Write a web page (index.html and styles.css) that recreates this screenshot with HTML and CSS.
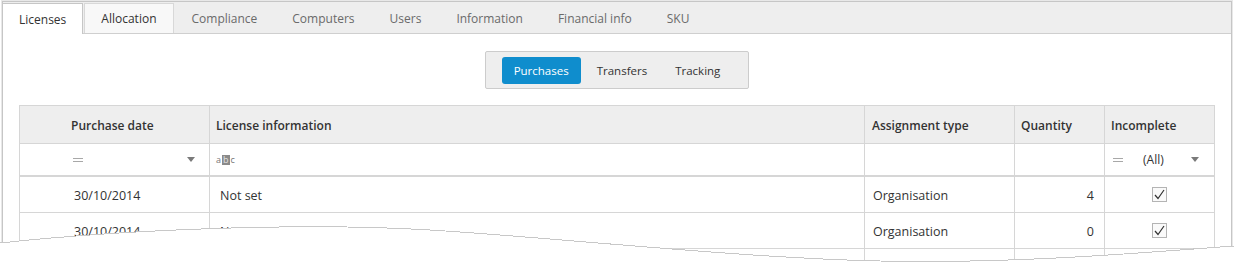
FILE: index.html
```html
<!DOCTYPE html>
<html lang="en">
<head>
<meta charset="utf-8">
<title>Licenses</title>
<link rel="stylesheet" href="styles.css">
</head>
<body>
<div class="frame">
  <div class="tabstrip">
    <div class="tab active">Licenses</div>
    <div class="tab alt">Allocation</div>
    <div class="tab">Compliance</div>
    <div class="tab">Computers</div>
    <div class="tab">Users</div>
    <div class="tab">Information</div>
    <div class="tab">Financial info</div>
    <div class="tab">SKU</div>
  </div>
  <div class="content">
    <div class="seg-wrap">
      <div class="seg">
        <div class="seg-btn on">Purchases</div>
        <div class="seg-btn">Transfers</div>
        <div class="seg-btn">Tracking</div>
      </div>
    </div>
    <div class="grid">
      <div class="c h col1h">Purchase date</div>
      <div class="c h col2h">License information</div>
      <div class="c h col3h">Assignment type</div>
      <div class="c h col4h">Quantity</div>
      <div class="c h col5h">Incomplete</div>

      <div class="c f col1f"><span class="eq"></span><span class="dd"></span></div>
      <div class="c f col2f"><span class="abc">a<span class="abc-b">b</span>c</span></div>
      <div class="c f"></div>
      <div class="c f"></div>
      <div class="c f col5f"><span class="eq"></span><span class="all">(All)</span><span class="dd"></span></div>

      <div class="c r col1d">30/10/2014</div>
      <div class="c r col2d">Not set</div>
      <div class="c r col3d">Organisation</div>
      <div class="c r col4d">4</div>
      <div class="c r col5d"><svg class="chk" width="15" height="15" viewBox="0 0 15 15"><rect x="0.5" y="0.5" width="14" height="14" fill="#fafafa" stroke="#b4b4b4"/><polyline points="3,8 6,11.5 12,3" fill="none" stroke="#333" stroke-width="1.2"/></svg></div>

      <div class="c r col1d">30/10/2014</div>
      <div class="c r col2d">Not set</div>
      <div class="c r col3d">Organisation</div>
      <div class="c r col4d">0</div>
      <div class="c r col5d"><svg class="chk" width="15" height="15" viewBox="0 0 15 15"><rect x="0.5" y="0.5" width="14" height="14" fill="#fafafa" stroke="#b4b4b4"/><polyline points="3,8 6,11.5 12,3" fill="none" stroke="#333" stroke-width="1.2"/></svg></div>

      <div class="c r-cut"></div>
      <div class="c r-cut"></div>
      <div class="c r-cut"></div>
      <div class="c r-cut"></div>
      <div class="c r-cut"></div>
    </div>
  </div>
</div>
<svg class="tear" width="1234" height="263" viewBox="0 0 1234 263" shape-rendering="crispEdges">
  <path d="M0,243 C120,230 300,222 430,230 S740,258 880,261 S1150,252 1234,246 L1234,263 L0,263 Z" fill="#fff"/>
  <path d="M0,243 C120,230 300,222 430,230 S740,258 880,261 S1150,252 1234,246" fill="none" stroke="#c8c8c8" stroke-width="1"/>
</svg>
</body>
</html>
```
FILE: styles.css
```css
html, body {
  margin: 0;
  padding: 0;
}

body {
  width: 1234px;
  height: 263px;
  overflow: hidden;
  position: relative;
  background: #fff;
  font-family: "Open Sans", "Noto Sans", sans-serif;
  font-size: 12.5px;
  color: #333;
}

.frame {
  box-sizing: border-box;
  margin: 1px 2px 0 2px;
  height: 262px;
  overflow: hidden;
  border: 1px solid #c6c6c6;
  border-bottom: 0;
  box-shadow: 0 0 0 1px #e8e8e8;
  background: #fff;
}

.tabstrip {
  display: flex;
  align-items: flex-end;
  gap: 1px;
  height: 31px;
  background: #eee;
  border-bottom: 1px solid #cfcfcf;
  font-size: 12px;
}

.tab {
  box-sizing: border-box;
  height: 30px;
  padding: 0 16px;
  display: flex;
  align-items: center;
  color: #6a6a6a;
  border: 1px solid transparent;
  border-bottom: 0;
  white-space: nowrap;
}

.tab.active {
  position: relative;
  height: 31px;
  margin-bottom: -1px;
  margin-left: -1px;
  background: #fff;
  color: #333;
  border-color: #c6c6c6;
}

.tab.alt {
  background: #f8f8f8;
  border-color: #d8d8d8;
  color: #333;
}

.content {
  padding: 17px 16px 0;
}

.seg-wrap {
  display: flex;
  justify-content: center;
}

.seg {
  box-sizing: border-box;
  height: 38px;
  display: flex;
  align-items: center;
  gap: 4px;
  padding: 0 16px;
  background: #eee;
  border: 1px solid #ccc;
  border-radius: 2px;
}

.seg-btn {
  height: 27px;
  padding: 0 12px;
  display: flex;
  align-items: center;
  border-radius: 3px;
  font-size: 11.5px;
  color: #333;
}

.seg-btn.on {
  background: #0f8dcd;
  color: #fff;
}

.grid {
  margin-top: 16px;
  display: grid;
  grid-template-columns: 190px 655px 150px 90px 110px;
  border-top: 1px solid #d6d6d6;
  border-left: 1px solid #d6d6d6;
}

.c {
  box-sizing: border-box;
  display: flex;
  align-items: center;
  padding: 0 8px;
  border-right: 1px solid #d6d6d6;
  border-bottom: 1px solid #d6d6d6;
  white-space: nowrap;
}

.h {
  height: 38px;
  padding-top: 1px;
  background: #eee;
  font-weight: 600;
  font-size: 12px;
  color: #333;
}

.f {
  height: 33px;
  border-bottom-width: 2px;
}

.r {
  height: 36px;
  padding-top: 1px;
}

.r-cut {
  height: 12px;
  border-bottom: 0;
}

.col1h { padding-left: 51px; }
.col2h { padding-left: 6px; }
.col3h { padding-left: 7px; }
.col4h { padding-left: 6px; }
.col5h { padding-left: 6px; }

.col1f { padding: 0 14px 0 53px; }
.col2f { padding-left: 6px; }
.col5f { padding: 0 15px 0 8px; }

.col1d { padding-left: 54px; }
.col2d { padding-left: 10px; }
.col3d { padding-left: 8px; }
.col4d { justify-content: flex-end; padding-right: 10px; }
.col5d { justify-content: center; padding: 0; }

.eq {
  box-sizing: border-box;
  width: 10px;
  height: 4px;
  border-top: 1px solid #a8a8a8;
  border-bottom: 1px solid #a8a8a8;
}

.dd {
  margin-left: auto;
  width: 0;
  height: 0;
  border-left: 4.5px solid transparent;
  border-right: 4.5px solid transparent;
  border-top: 5px solid #7a7a7a;
}

.all {
  margin-left: 20px;
  font-size: 12px;
}

.abc {
  display: flex;
  align-items: center;
  font-size: 9px;
  line-height: 10px;
  color: #777;
}

.abc-b {
  background: #8a8a8a;
  color: #e4e4e4;
  padding: 0 1px;
  margin: 0 1px;
}

.chk {
  display: block;
}

.tear {
  position: absolute;
  top: 0;
  left: 0;
  pointer-events: none;
}
```
